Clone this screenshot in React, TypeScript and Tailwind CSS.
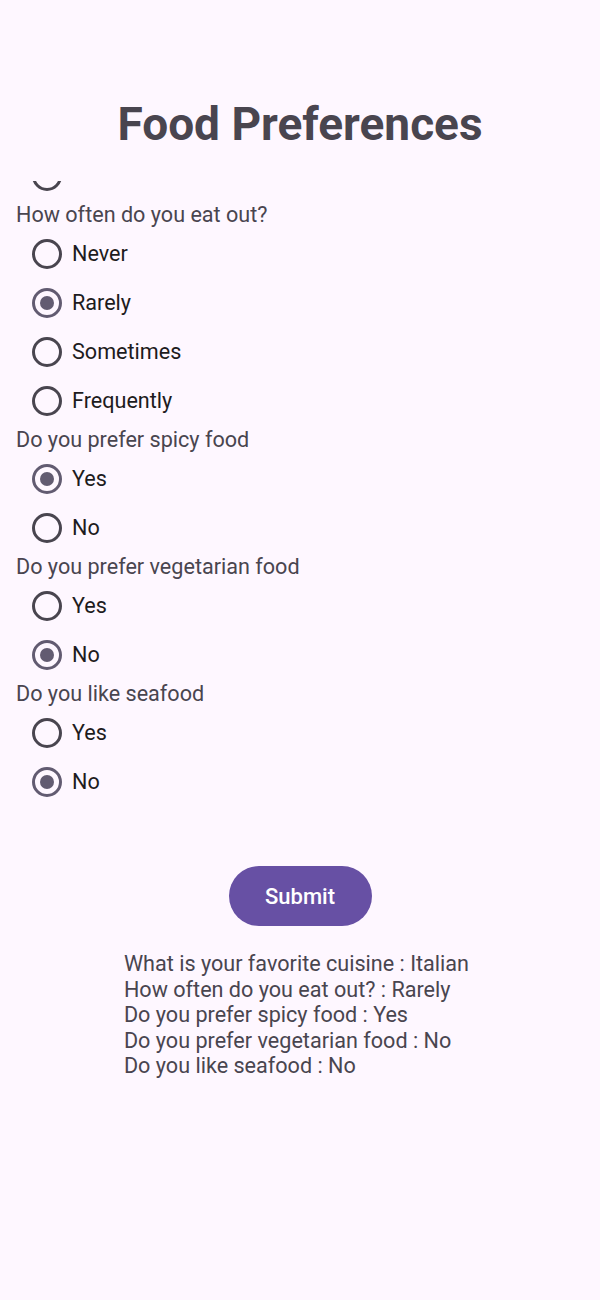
const sections = [
  { q: "How often do you eat out?", options: ["Never", "Rarely", "Sometimes", "Frequently"], picked: "Rarely" },
  { q: "Do you prefer spicy food", options: ["Yes", "No"], picked: "Yes" },
  { q: "Do you prefer vegetarian food", options: ["Yes", "No"], picked: "No" },
  { q: "Do you like seafood", options: ["Yes", "No"], picked: "No" },
];

const summary = [
  "What is your favorite cuisine : Italian",
  "How often do you eat out? : Rarely",
  "Do you prefer spicy food : Yes",
  "Do you prefer vegetarian food : No",
  "Do you like seafood : No",
];

function Radio({ label, checked }: { label: string; checked: boolean }) {
  return (
    <div className="flex h-[49px] items-center pl-[32px]">
      <span
        className={
          "flex h-[30px] w-[30px] shrink-0 items-center justify-center rounded-full border-[3px] " +
          (checked ? "border-[#625B71]" : "border-[#49454F]")
        }
      >
        {checked && <span className="h-[14px] w-[14px] rounded-full bg-[#625B71]" />}
      </span>
      <span className="ml-[10px] text-[21.6px] leading-[26px] text-[#1D1B20]">{label}</span>
    </div>
  );
}

export default function App() {
  return (
    <div className="flex min-h-[1300px] flex-col items-center bg-[#FEF7FF] font-['Roboto',sans-serif]">
      <h1 className="mb-[33px] pt-[100px] text-[46px] font-bold leading-[48px] text-[#49454F]">
        Food Preferences
      </h1>

      {/* list is scrolled: the last cuisine option is cut at the top */}
      <div className="h-[640px] w-full overflow-hidden">
        <div className="-mt-[30px]">
          <Radio label="" checked={false} />
          {sections.map((s) => (
            <div key={s.q}>
              <div className="h-[29px] pl-[16px] text-[21.6px] leading-[29px] text-[#49454F]">{s.q}</div>
              {s.options.map((o) => (
                <Radio key={o} label={o} checked={o === s.picked} />
              ))}
            </div>
          ))}
        </div>
      </div>

      <button className="mt-[45px] flex h-[60px] w-[143px] items-center justify-center rounded-full bg-[#6750A4] text-[22px] font-medium text-white">
        Submit
      </button>

      <div className="mt-[25px] pr-[7px] text-[21.6px] leading-[25.5px] text-[#49454F]">
        {summary.map((line) => (
          <div key={line}>{line}</div>
        ))}
      </div>
    </div>
  );
}
